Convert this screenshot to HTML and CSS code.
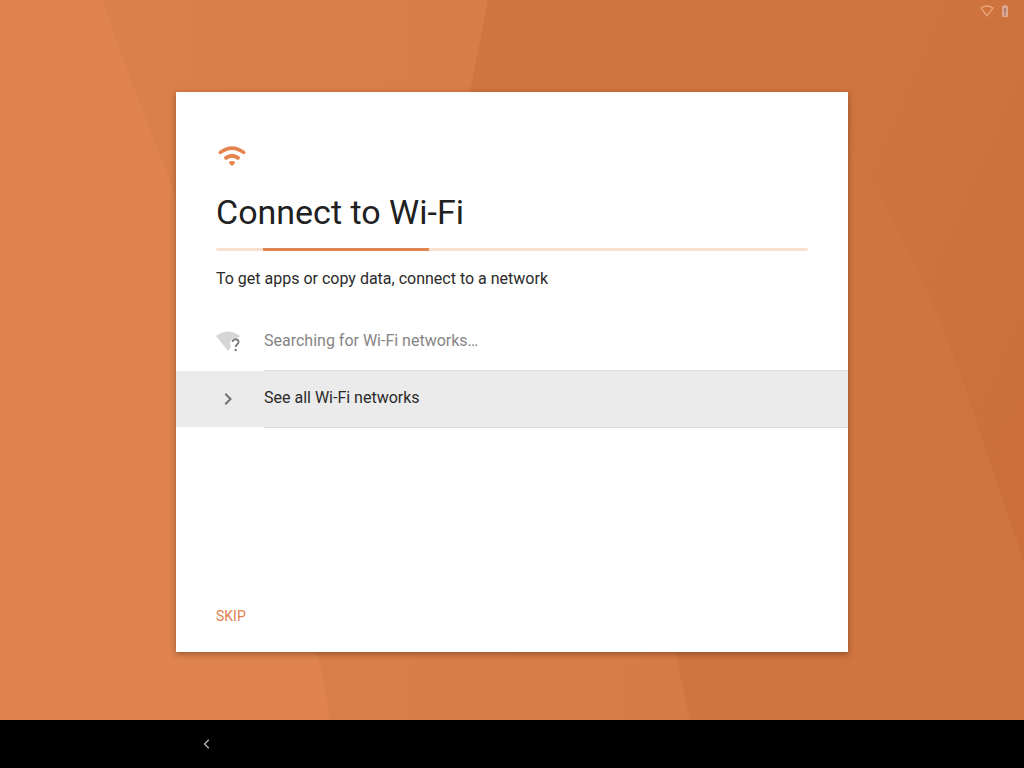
FILE: index.html
```html
<!DOCTYPE html>
<html lang="en">
<head>
  <meta charset="UTF-8">
  <meta name="viewport" content="width=device-width, initial-scale=1.0">
  <title>Connect to Wi-Fi</title>
  <link rel="stylesheet" href="styles.css">
</head>
<body>

  <div class="stage">
    <svg class="wallpaper" viewBox="0 0 1024 720" preserveAspectRatio="none" aria-hidden="true">
      <defs>
        <linearGradient id="mid" x1="0" x2="1" y1="0" y2="0">
          <stop offset="0" stop-color="#da804b"/>
          <stop offset="1" stop-color="#d47943"/>
        </linearGradient>
        <linearGradient id="edge" x1="0" x2="1" y1="0" y2="1">
          <stop offset="0.2" stop-color="#cf753f"/>
          <stop offset="1" stop-color="#ca6f39"/>
        </linearGradient>
      </defs>
      <rect width="1024" height="720" fill="#df844f"/>
      <path d="M103 0C125 70 145 115 166 170C230 350 300 530 330 720H1024V0Z" fill="url(#mid)"/>
      <path d="M488 0L470 92C450 260 640 450 676 656L690 720H1024V0Z" fill="#cf753f"/>
      <path d="M780 0C810 80 860 160 898 230C935 300 960 370 981 436L1024 562V0Z" fill="url(#edge)"/>
    </svg>

    <div class="status-bar">
      <svg width="16" height="16" viewBox="0 0 16 16" role="img" aria-label="Wi-Fi off">
        <path d="M2 5Q8 1 14 5L8 13Z" fill="none" stroke="#eba57c" stroke-width="1.3"/>
      </svg>
      <svg width="16" height="16" viewBox="0 0 16 16" role="img" aria-label="Battery">
        <path d="M6.5 2h3v1H11v11H5V3h1.5z" fill="#dfa88c"/>
        <path d="M7.5 5h1v5h-1zM7.5 11h1v1.5h-1z" fill="#7d5068"/>
      </svg>
    </div>

    <main class="card">
      <svg class="card-icon" width="32" height="32" viewBox="0 0 32 32" fill="none" stroke="#e5844e" stroke-linecap="round" aria-hidden="true">
        <path d="M4.3 12.4Q16 3.8 27.7 12.4" stroke-width="3.6"/>
        <path d="M10 17.9Q16 13.5 22 17.9" stroke-width="3.8"/>
        <path d="M12.8 22.2Q16 19.6 19.2 22.2Q18.8 24.4 16 25.8Q13.2 24.4 12.8 22.2Z" fill="#e5844e" stroke="none"/>
      </svg>
      <h1 class="title">Connect to Wi-Fi</h1>
      <div class="progress" role="progressbar" aria-label="Searching">
        <div class="progress-fill"></div>
      </div>
      <p class="description">To get apps or copy data, connect to a network</p>

      <ul class="networks">
        <li class="row searching">
          <svg class="row-icon" width="24" height="24" viewBox="0 0 24 24" aria-hidden="true">
            <path d="M0 6Q12-3 24 6L22 8Q15 7 14 13L15 17L12 21Z" fill="#d6d6d6"/>
            <path d="M16.5 12C16.5 8.2 22.7 8.5 22.6 12C22.5 14.3 19.7 14.3 19.7 17" fill="none" stroke="#757575" stroke-width="1.8"/>
            <circle cx="19.7" cy="20" r="1.2" fill="#757575"/>
          </svg>
          <span class="row-label">Searching for Wi-Fi networks…</span>
        </li>
        <li>
          <button class="row see-all" type="button">
            <svg class="row-icon" width="24" height="24" viewBox="0 0 24 24" aria-hidden="true">
              <path d="M9.3 6.8L14.5 12L9.3 17.2" fill="none" stroke="#707070" stroke-width="2"/>
            </svg>
            <span class="row-label">See all Wi-Fi networks</span>
          </button>
        </li>
      </ul>

      <button class="skip" type="button">SKIP</button>
    </main>
  </div>

  <nav class="nav-bar">
    <button class="back" type="button" aria-label="Back">
      <svg width="16" height="16" viewBox="0 0 16 16" aria-hidden="true">
        <path d="M9.8 3.8L5.6 8L9.8 12.2" fill="none" stroke="#b8b8b8" stroke-width="1.3"/>
      </svg>
    </button>
  </nav>

</body>
</html>
```
FILE: styles.css
```css
* {
  box-sizing: border-box;
}
body {
  margin: 0;
  min-height: 100vh;
  display: flex;
  flex-direction: column;
  background-color: #000;
  color: #2a2a2a;
  font-family: Roboto, Arial, sans-serif;
  font-size: 16px;
  line-height: 24px;
}
button {
  border: 0;
  padding: 0;
  background: none;
  color: inherit;
  font: inherit;
  text-align: left;
  cursor: pointer;
}
svg {
  display: block;
}
.stage {
  position: relative;
  flex: 1;
  display: flex;
  flex-direction: column;
  align-items: center;
}
/* sits behind the card */
.wallpaper {
  position: absolute;
  inset: 0;
  width: 100%;
  height: 100%;
  z-index: -1;
}
.status-bar {
  display: flex;
  align-self: flex-end;
  align-items: center;
  gap: 2px;
  height: 24px;
  padding: 0 11px 2px;
}
.card {
  display: flex;
  flex-direction: column;
  width: calc(100% - 48px);
  max-width: 672px;
  min-height: 560px;
  margin: auto;
  padding: 48px 0 24px;
  background-color: #fff;
  box-shadow: 0 2px 6px rgba(70, 30, 10, 0.45);
}
.card-icon {
  margin: 0 40px;
}
.title {
  margin: 16px 40px 12px;
  color: #212121;
  font-size: 34px;
  font-weight: 400;
  line-height: 48px;
}
.progress {
  height: 3px;
  margin: 0 40px;
  border-radius: 2px;
  background-color: #fbe0d1;
}
.progress-fill {
  width: 28%;
  height: 100%;
  margin-left: 8%;
  background-color: #e08650;
}
.description {
  margin: 16px 40px 23px;
}
.networks {
  margin: 0;
  padding: 0;
  list-style: none;
}
.row {
  display: flex;
  align-items: center;
  gap: 24px;
  width: 100%;
  height: 57px;
  padding-left: 40px;
}
.row-icon {
  margin-bottom: 1px;
}
.row-label {
  flex: 1;
  height: 100%;
  padding-top: 15px;
  border-bottom: 1px solid #dcdcdc;
}
.searching {
  color: #858585;
}
.see-all {
  background: linear-gradient(#ebebeb, #ebebeb) no-repeat 0 0 / 100% 56px;
}
.skip {
  align-self: flex-start;
  margin: auto 40px 0;
  color: #e0824c;
  font-size: 14px;
}
.nav-bar {
  display: flex;
  align-items: center;
  height: 48px;
  padding-left: 19%;
}
.back {
  padding: 4px;
}
```
